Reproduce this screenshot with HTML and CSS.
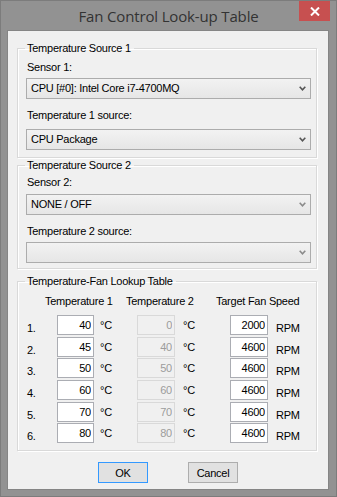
FILE: index.html
```html
<!DOCTYPE html>
<html lang="en">
<head>
  <meta charset="UTF-8" />
  <title>Fan Control Look-up Table</title>
  <link rel="stylesheet" href="styles.css">
</head>
<body>
  <div class="window">
    <!-- title bar -->
    <div class="titlebar">
      <span></span>
      <span class="title">Fan Control Look-up Table</span>
      <button class="close" aria-label="Close">
        <svg width="10" height="9" viewBox="0 0 10 9"><path d="M1 0.5 L9 8.5 M9 0.5 L1 8.5" stroke="#fff" stroke-width="2"/></svg>
      </button>
    </div>

    <div class="client">
      <fieldset class="group group-1">
        <legend>Temperature Source 1</legend>
        <div class="field-label">Sensor 1:</div>
        <div class="combo">
          <span>CPU [#0]: Intel Core i7-4700MQ</span>
          <svg class="chev" width="7" height="5" viewBox="0 0 7 5"><polyline points="0.7,0.8 3.5,3.8 6.3,0.8" fill="none" stroke="#555" stroke-width="1.6"/></svg>
        </div>
        <div class="field-label spaced">Temperature 1 source:</div>
        <div class="combo">
          <span>CPU Package</span>
          <svg class="chev" width="7" height="5" viewBox="0 0 7 5"><polyline points="0.7,0.8 3.5,3.8 6.3,0.8" fill="none" stroke="#555" stroke-width="1.6"/></svg>
        </div>
      </fieldset>

      <fieldset class="group group-2">
        <legend>Temperature Source 2</legend>
        <div class="field-label">Sensor 2:</div>
        <div class="combo">
          <span>NONE / OFF</span>
          <svg class="chev" width="7" height="5" viewBox="0 0 7 5"><polyline points="0.7,0.8 3.5,3.8 6.3,0.8" fill="none" stroke="#8a8a8a" stroke-width="1.6"/></svg>
        </div>
        <div class="field-label tight">Temperature 2 source:</div>
        <div class="combo">
          <span></span>
          <svg class="chev" width="7" height="5" viewBox="0 0 7 5"><polyline points="0.7,0.8 3.5,3.8 6.3,0.8" fill="none" stroke="#8a8a8a" stroke-width="1.6"/></svg>
        </div>
      </fieldset>

      <fieldset class="group group-3">
        <legend>Temperature-Fan Lookup Table</legend>
        <div class="lut-head">
          <span class="h1">Temperature 1</span>
          <span class="h2">Temperature 2</span>
          <span>Target Fan Speed</span>
        </div>
        <div class="lut">
          <span class="num">1.</span><input class="val" value="40"><span class="unit">°C</span><input class="val" value="0" disabled><span class="unit u2">°C</span><input class="val" value="2000"><span class="rpm">RPM</span>
          <span class="num">2.</span><input class="val" value="45"><span class="unit">°C</span><input class="val" value="40" disabled><span class="unit u2">°C</span><input class="val" value="4600"><span class="rpm">RPM</span>
          <span class="num">3.</span><input class="val" value="50"><span class="unit">°C</span><input class="val" value="50" disabled><span class="unit u2">°C</span><input class="val" value="4600"><span class="rpm">RPM</span>
          <span class="num">4.</span><input class="val" value="60"><span class="unit">°C</span><input class="val" value="60" disabled><span class="unit u2">°C</span><input class="val" value="4600"><span class="rpm">RPM</span>
          <span class="num">5.</span><input class="val" value="70"><span class="unit">°C</span><input class="val" value="70" disabled><span class="unit u2">°C</span><input class="val" value="4600"><span class="rpm">RPM</span>
          <span class="num">6.</span><input class="val" value="80"><span class="unit">°C</span><input class="val" value="80" disabled><span class="unit u2">°C</span><input class="val" value="4600"><span class="rpm">RPM</span>
        </div>
      </fieldset>

      <div class="actions">
        <button class="btn btn-default">OK</button>
        <button class="btn">Cancel</button>
      </div>
    </div>
  </div>
</body>
</html>
```

FILE: styles.css
```css
* {
  box-sizing: border-box;
}

body {
  margin: 0;
  background: #909090;
  font-family: 'Liberation Sans', Arial, sans-serif;
  font-size: 11px;
  letter-spacing: -0.25px;
  color: #000;
}

.window {
  width: 337px;
  height: 497px;
  display: flex;
  flex-direction: column;
  background: #929292;
  border: 1px solid #7c7c7c;
}

.titlebar {
  height: 29px;
  display: grid;
  grid-template-columns: 1fr auto 1fr;
  align-items: start;
}

.title {
  font-family: 'Open Sans', 'Noto Sans', sans-serif;
  font-size: 15px;
  line-height: 20px;
  letter-spacing: -0.15px;
  color: #333;
  padding-top: 5px;
  white-space: nowrap;
}

.close {
  justify-self: end;
  width: 31px;
  height: 20px;
  margin-right: 6px;
  padding: 0;
  border: none;
  background: #c75050;
  display: flex;
  align-items: center;
  justify-content: center;
}

.client {
  flex: 1;
  margin: 0 7px 6px 6px;
  padding-top: 11px;
  background: #f0f0f0;
  border: 1px solid #858585;
}

/* group boxes */
.group {
  width: 300px;
  margin: 0 0 0 9px;
  padding: 0 5px 7px 8px;
  border: 1px solid #d9d9d9;
  box-shadow: inset 1px 1px 0 #fff, 1px 1px 0 #fff;
  min-width: 0;
}

.group legend {
  padding: 0 3px 0 2px;
  margin-left: -1px;
  line-height: 13px;
}

.group-1 {
  padding-top: 6px;
}

.group-2 {
  margin-top: 1px;
  padding-top: 4px;
  padding-bottom: 5px;
}

.group-3 {
  margin-top: 6px;
  padding-top: 7px;
}

.field-label {
  line-height: 13px;
  padding-left: 1px;
  margin-bottom: 4px;
}

.combo + .field-label {
  margin-top: 10px;
}

.field-label.spaced {
  margin-bottom: 7px;
}

.group-2 .field-label {
  margin-bottom: 5px;
}

.group-2 .field-label.tight {
  margin-bottom: 4px;
}

.combo {
  height: 21px;
  display: flex;
  align-items: center;
  justify-content: space-between;
  padding: 0 4px 0 4px;
  border: 1px solid #acacac;
  background: linear-gradient(#f2f2f2, #e6e6e6);
  line-height: 13px;
}

.chev {
  display: block;
  flex: none;
}

/* look-up table */
.lut-head {
  display: flex;
  padding-left: 19px;
  line-height: 13px;
  margin-bottom: 7px;
}

.lut-head .h1 {
  width: 81px;
}

.lut-head .h2 {
  width: 90px;
}

.lut {
  display: grid;
  grid-template-columns: 31px 37px 43px 38px 55px 38px auto;
  grid-auto-rows: 20px;
  row-gap: 1.7px;
}

.num {
  align-self: end;
  line-height: 13px;
  padding-left: 1px;
}

.val {
  width: 100%;
  height: 20px;
  margin: 0;
  padding: 0 2px 0 0;
  border: 1px solid #abadb3;
  background: #fff;
  font: inherit;
  letter-spacing: inherit;
  color: #000;
  text-align: right;
  outline: none;
}

.val:disabled {
  background: #f0f0f0;
  border-color: #d9d9d9;
  color: #9c9c9c;
}

.unit {
  align-self: end;
  line-height: 13px;
  margin-bottom: 3px;
  padding-left: 6px;
}

.unit.u2 {
  padding-left: 8px;
}

.rpm {
  align-self: end;
  line-height: 13px;
  padding-left: 8px;
}

/* buttons */
.actions {
  display: flex;
  justify-content: center;
  gap: 40px;
  margin-top: 11px;
}

.btn {
  width: 50px;
  height: 21px;
  padding: 0;
  border: 1px solid #adadad;
  background: #e1e1e1;
  font: inherit;
  letter-spacing: inherit;
  color: #000;
}

.btn-default {
  border-color: #3399ff;
}
```
